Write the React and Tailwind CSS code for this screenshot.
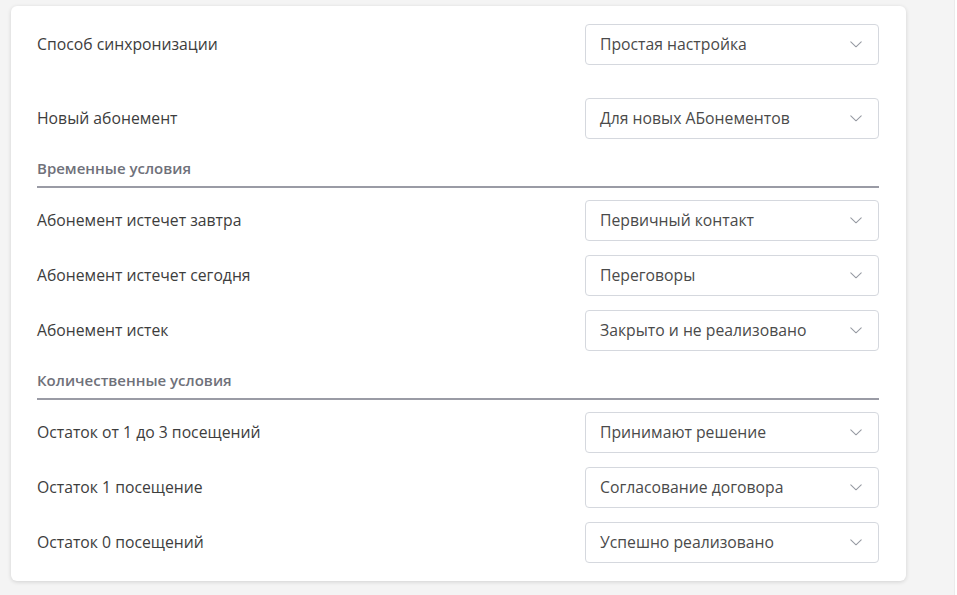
import React from "react";

const Chevron = () => (
  <svg width="12" height="7" viewBox="0 0 12 7" fill="none" className="shrink-0">
    <path d="M0.8 0.8l5.2 5 5.2-5" stroke="#969aa2" strokeWidth="1.05" strokeLinecap="round" strokeLinejoin="round" />
  </svg>
);

const Row = ({ label, value, className = "" }) => (
  <div className={"flex items-center justify-between " + className}>
    <span className="text-[15.75px] text-[#3d3d3d]">{label}</span>
    <div className="flex h-[41px] w-[294px] items-center justify-between rounded-[4px] border border-[#d5d8de] bg-white pl-[14px] pr-[16px]">
      <span className="text-[15.75px] text-[#4a4a4a]">{value}</span>
      <Chevron />
    </div>
  </div>
);

const Heading = ({ children }) => (
  <div className="mt-[17px] border-b-2 border-[#9a9ba5] pb-[6px]">
    <span className="text-[15px] font-semibold leading-[22px] text-[#6f717a]">{children}</span>
  </div>
);

export default function App() {
  return (
    <div
      className="flex h-[595px] w-full bg-[#f4f4f4]"
      style={{ fontFamily: '"Open Sans", "Noto Sans", sans-serif' }}
    >
      <div className="flex-1 pl-[11px] pt-[6px]">
        <div className="w-[895px] rounded-[6px] bg-white pb-[18px] pl-[26px] pr-[27px] pt-[18px] shadow-[0_1px_4px_rgba(0,0,0,0.14)]">
          <Row label="Способ синхронизации" value="Простая настройка" />
          <Row className="mt-[33px]" label="Новый абонемент" value="Для новых АБонементов" />
          <Heading>Временные условия</Heading>
          <Row className="mt-[12px]" label="Абонемент истечет завтра" value="Первичный контакт" />
          <Row className="mt-[14px]" label="Абонемент истечет сегодня" value="Переговоры" />
          <Row className="mt-[14px]" label="Абонемент истек" value="Закрыто и не реализовано" />
          <Heading>Количественные условия</Heading>
          <Row className="mt-[12px]" label="Остаток от 1 до 3 посещений" value="Принимают решение" />
          <Row className="mt-[14px]" label="Остаток 1 посещение" value="Согласование договора" />
          <Row className="mt-[14px]" label="Остаток 0 посещений" value="Успешно реализовано" />
        </div>
      </div>
      <div className="w-[3px] border-l border-[#ebebeb] bg-white" />
    </div>
  );
}
